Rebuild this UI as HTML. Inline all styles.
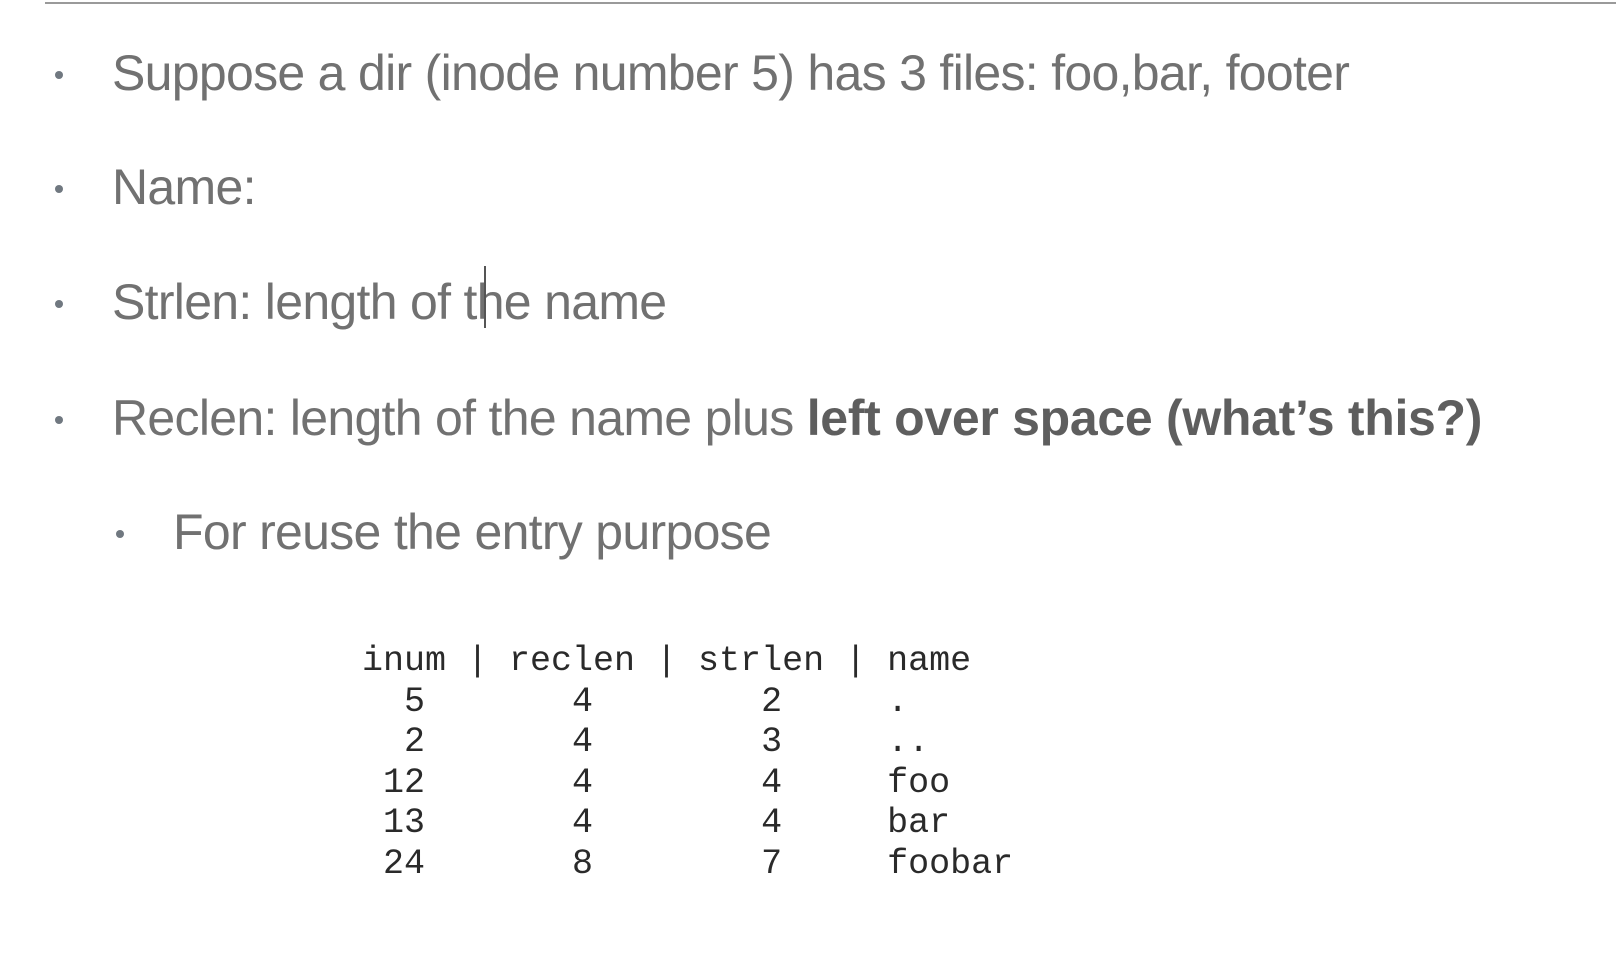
<!DOCTYPE html>
<html><head><meta charset="utf-8"><style>
body{margin:0;width:1616px;height:954px;background:#fff;position:relative;overflow:hidden;font-family:"Liberation Sans",sans-serif;}
.rule{position:absolute;left:45px;top:2px;width:1571px;height:2px;background:#9a9a9a;}
.li{position:absolute;color:#717171;font-size:50px;letter-spacing:-0.7px;white-space:nowrap;line-height:60px;}
.b{position:absolute;width:8px;height:8px;border-radius:50%;background:#707880;}
.li strong{color:#5e5e5e;letter-spacing:-0.3px}
pre{position:absolute;left:362px;top:641px;margin:0;font-family:"Liberation Mono",monospace;font-size:35px;line-height:40.6px;color:#2a2a2a;}
.cur{position:absolute;left:484px;top:266px;width:2px;height:62px;background:#555;}
</style></head><body>
<div class="rule"></div>
<div class="b" style="left:55px;top:71px"></div><div class="li" style="left:112px;top:43px">Suppose a dir (inode number 5) has 3 files: foo,bar, footer</div>
<div class="b" style="left:55px;top:185px"></div><div class="li" style="left:112px;top:157px">Name:</div>
<div class="b" style="left:55px;top:300px"></div><div class="li" style="left:112px;top:272px">Strlen: length of the name</div>
<div class="cur"></div>
<div class="b" style="left:55px;top:416px"></div><div class="li" style="left:112px;top:388px">Reclen: length of the name plus <strong>left over space (what’s this?)</strong></div>
<div class="b" style="left:116px;top:530px"></div><div class="li" style="left:173px;top:502px">For reuse the entry purpose</div>
<pre>inum | reclen | strlen | name
  5       4        2     .
  2       4        3     ..
 12       4        4     foo
 13       4        4     bar
 24       8        7     foobar</pre>
</body></html>
